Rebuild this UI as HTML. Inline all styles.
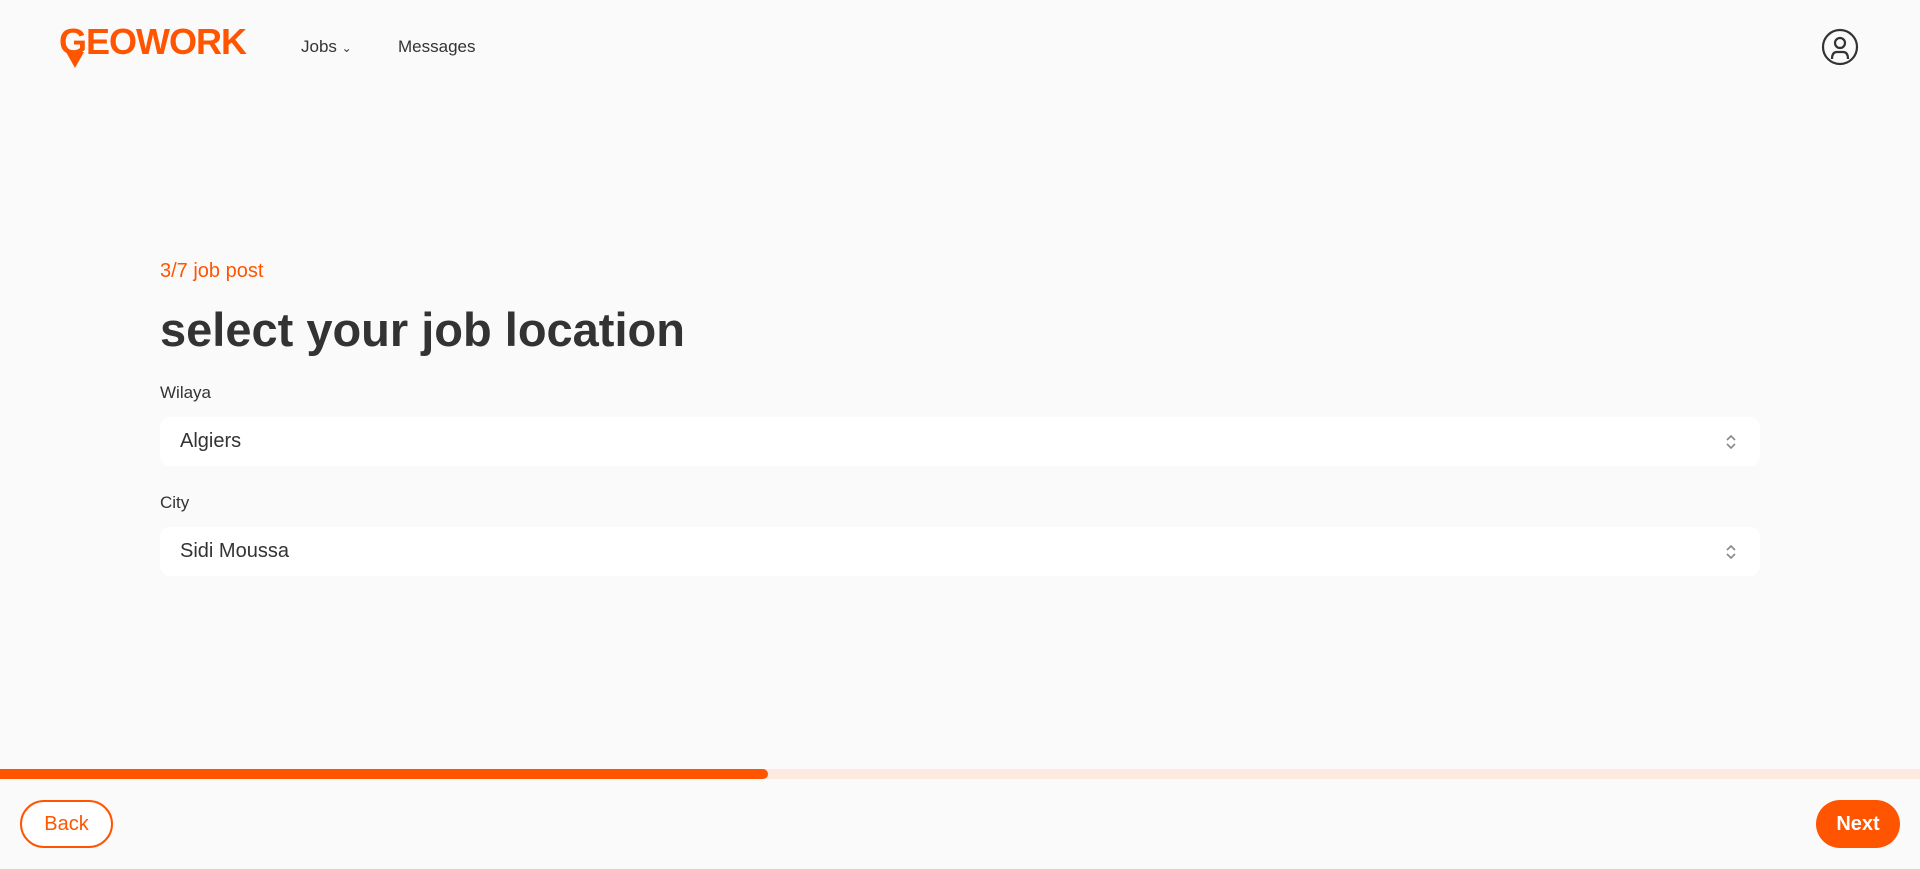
<!DOCTYPE html>
<html><head><meta charset="utf-8"><style>
*{margin:0;padding:0;box-sizing:border-box}
body{width:1920px;height:869px;background:#fafafa;font-family:"Liberation Sans",sans-serif;color:#333;position:relative;overflow:hidden}
.abs{position:absolute}
.logo{left:59px;top:24px;font-size:36px;font-weight:900;color:#ff5500;letter-spacing:-1px;font-family:"Liberation Sans",sans-serif;line-height:36px}
.nav{font-size:17px;color:#333;top:37px}
.sel{left:160px;width:1600px;height:49px;background:#fff;border-radius:10px;font-size:20px;padding-left:20px;line-height:49px;color:#333}
.lbl{left:160px;font-size:17px;color:#333}
.chev{position:absolute;right:22px;top:15px}
</style></head><body>
<div class="abs logo">GEOWORK</div>
<svg class="abs" style="left:66px;top:52px" width="18" height="18"><path d="M0 0 L18 0 L9 16 Z" fill="#ff5500"/></svg>
<div class="abs nav" style="left:301px">Jobs <span style="font-size:12px">&#8964;</span></div>
<div class="abs nav" style="left:398px">Messages</div>
<svg class="abs" style="left:1821px;top:28px" width="38" height="38" viewBox="0 0 38 38" fill="none" stroke="#333" stroke-width="2.2"><circle cx="19" cy="19" r="17"/><circle cx="19" cy="15" r="5"/><path d="M11 31 Q11 24 16 24 L22 24 Q27 24 27 31"/></svg>
<div class="abs" style="left:160px;top:260px;font-size:20px;color:#ff5500">3/7 job post</div>
<div class="abs" style="left:160px;top:302px;font-size:47px;font-weight:bold;color:#333">select your job location</div>
<div class="abs lbl" style="top:383px">Wilaya</div>
<div class="abs sel" style="top:417px">Algiers<svg class="chev" width="14" height="20" viewBox="0 0 14 20" fill="none" stroke="#888" stroke-width="1.6"><path d="M3 8 L7 4 L11 8 M3 12 L7 16 L11 12"/></svg></div>
<div class="abs lbl" style="top:493px">City</div>
<div class="abs sel" style="top:527px">Sidi Moussa<svg class="chev" width="14" height="20" viewBox="0 0 14 20" fill="none" stroke="#888" stroke-width="1.6"><path d="M3 8 L7 4 L11 8 M3 12 L7 16 L11 12"/></svg></div>
<div class="abs" style="left:0;top:769px;width:1920px;height:10px;background:#fde9df"></div>
<div class="abs" style="left:0;top:769px;width:768px;height:10px;background:#ff5500;border-radius:0 5px 5px 0"></div>
<div class="abs" style="left:20px;top:800px;width:93px;height:48px;border:2px solid #ff5500;border-radius:24px;background:#fff;color:#ff5500;font-size:20px;text-align:center;line-height:44px">Back</div>
<div class="abs" style="left:1816px;top:800px;width:84px;height:48px;border-radius:24px;background:#ff5500;color:#fff;font-size:20px;font-weight:bold;text-align:center;line-height:48px">Next</div>
</body></html>
